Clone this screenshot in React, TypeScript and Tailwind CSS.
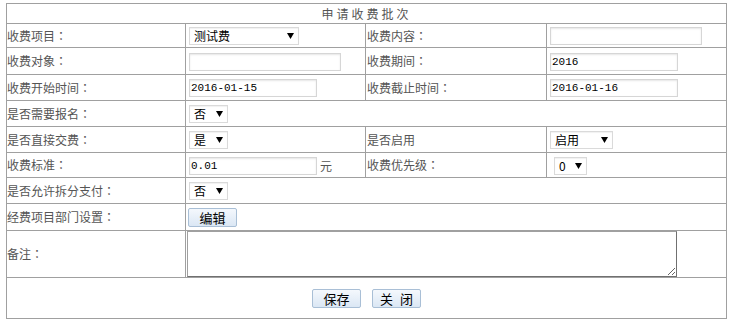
import React from "react";

const Arrow = () => (
  <svg width="7" height="6" viewBox="0 0 7 6" className="shrink-0">
    <polygon points="0,0 7,0 3.5,6" fill="#000" />
  </svg>
);

function Sel({ w, text, ml = "" }: { w: string; text: string; ml?: string }) {
  return (
    <div
      className={`inline-flex items-center justify-between h-[18px] border border-[#dadada] bg-white pl-[4px] pr-[4px] align-middle text-black shadow-[inset_0_1px_1px_rgba(0,0,0,0.06)] ${w} ${ml}`}
    >
      <span className="leading-none">{text}</span>
      <Arrow />
    </div>
  );
}

function Inp({ w, value = "" }: { w: string; value?: string }) {
  return (
    <input
      readOnly
      value={value}
      className={`h-[18px] border border-[#d6d6d6] bg-white px-[1px] align-middle text-black text-[11px] font-['Liberation_Mono',monospace] outline-none shadow-[inset_0_1px_2px_rgba(0,0,0,0.1)] ${w}`}
    />
  );
}

function Btn({ text }: { text: string }) {
  return (
    <button className="inline-flex h-[19px] w-[49px] items-center justify-center gap-[7px] rounded-[2px] border border-[#a9bfd6] bg-gradient-to-b from-[#f4f8fd] to-[#dbe7f4] text-[13px] text-black leading-none align-middle">
      {text.split(" ").map((p, i) => (
        <span key={i}>{p}</span>
      ))}
    </button>
  );
}

function Lbl({ t, colon = true }: { t: string; colon?: boolean }) {
  return (
    <>
      {t}
      {colon && <span className="font-['Noto_Sans_CJK_JP',sans-serif]">：</span>}
    </>
  );
}

const L = "p-0 pl-0 border border-[#a0a0a0] align-middle whitespace-nowrap";

export default function App() {
  return (
    <div className="min-h-[333px] bg-white pt-[3px] pl-[6px] font-['Noto_Sans_CJK_SC',sans-serif] text-[12px] text-[#555]">
      <table className="table-fixed border-collapse w-[720px]">
        <colgroup>
          <col className="w-[179px]" />
          <col className="w-[180px]" />
          <col className="w-[181px]" />
          <col className="w-[180px]" />
        </colgroup>
        <tbody>
          <tr className="h-[20px]">
            <td colSpan={4} className={`${L} text-center tracking-[3px] text-[#555]`}>
              申请收费批次
            </td>
          </tr>
          <tr className="h-[24px]">
            <td className={L}><Lbl t="收费项目" /></td>
            <td className={`${L} pl-[3px]`}>
              <Sel w="w-[110px]" text="测试费" />
            </td>
            <td className={`${L} pl-[1px]`}><Lbl t="收费内容" /></td>
            <td className={`${L} pl-[3px]`}>
              <Inp w="w-[152px]" />
            </td>
          </tr>
          <tr className="h-[27px]">
            <td className={L}><Lbl t="收费对象" /></td>
            <td className={`${L} pl-[3px]`}>
              <Inp w="w-[152px]" />
            </td>
            <td className={`${L} pl-[1px]`}><Lbl t="收费期间" /></td>
            <td className={`${L} pl-[3px]`}>
              <Inp w="w-[128px]" value="2016" />
            </td>
          </tr>
          <tr className="h-[26px]">
            <td className={L}><Lbl t="收费开始时间" /></td>
            <td className={`${L} pl-[3px]`}>
              <Inp w="w-[128px]" value="2016-01-15" />
            </td>
            <td className={`${L} pl-[1px]`}><Lbl t="收费截止时间" /></td>
            <td className={`${L} pl-[3px]`}>
              <Inp w="w-[128px]" value="2016-01-16" />
            </td>
          </tr>
          <tr className="h-[26px]">
            <td className={L}><Lbl t="是否需要报名" /></td>
            <td colSpan={3} className={`${L} pl-[3px]`}>
              <Sel w="w-[39px]" text="否" />
            </td>
          </tr>
          <tr className="h-[26px]">
            <td className={L}><Lbl t="是否直接交费" /></td>
            <td className={`${L} pl-[3px]`}>
              <Sel w="w-[39px]" text="是" />
            </td>
            <td className={`${L} pl-[1px]`}><Lbl t="是否启用" colon={false} /></td>
            <td className={`${L} pl-[3px]`}>
              <Sel w="w-[63px]" text="启用" />
            </td>
          </tr>
          <tr className="h-[25px]">
            <td className={L}><Lbl t="收费标准" /></td>
            <td className={`${L} pl-[3px]`}>
              <Inp w="w-[128px]" value="0.01" />
              <span className="ml-[3px] align-middle">元</span>
            </td>
            <td className={`${L} pl-[1px]`}><Lbl t="收费优先级" /></td>
            <td className={`${L} pl-[3px]`}>
              <Sel w="w-[33px]" text="0" ml="ml-[4px]" />
            </td>
          </tr>
          <tr className="h-[26px]">
            <td className={L}><Lbl t="是否允许拆分支付" /></td>
            <td colSpan={3} className={`${L} pl-[3px]`}>
              <Sel w="w-[39px]" text="否" />
            </td>
          </tr>
          <tr className="h-[27px]">
            <td className={L}><Lbl t="经费项目部门设置" /></td>
            <td colSpan={3} className={`${L} pl-[2px]`}>
              <Btn text="编辑" />
            </td>
          </tr>
          <tr className="h-[47px]">
            <td className={L}><Lbl t="备注" /></td>
            <td colSpan={3} className={`${L} pl-[1px]`}>
              <textarea
                readOnly
                className="block h-[46px] w-[490px] resize border border-[#a0a0a0] border-r-[#707070] border-b-[#707070] bg-white outline-none"
              />
            </td>
          </tr>
          <tr className="h-[41px]">
            <td colSpan={4} className={`${L} text-center`}>
              <div className="flex items-center justify-center gap-[11px]">
                <Btn text="保存" />
                <Btn text="关 闭" />
              </div>
            </td>
          </tr>
        </tbody>
      </table>
    </div>
  );
}
